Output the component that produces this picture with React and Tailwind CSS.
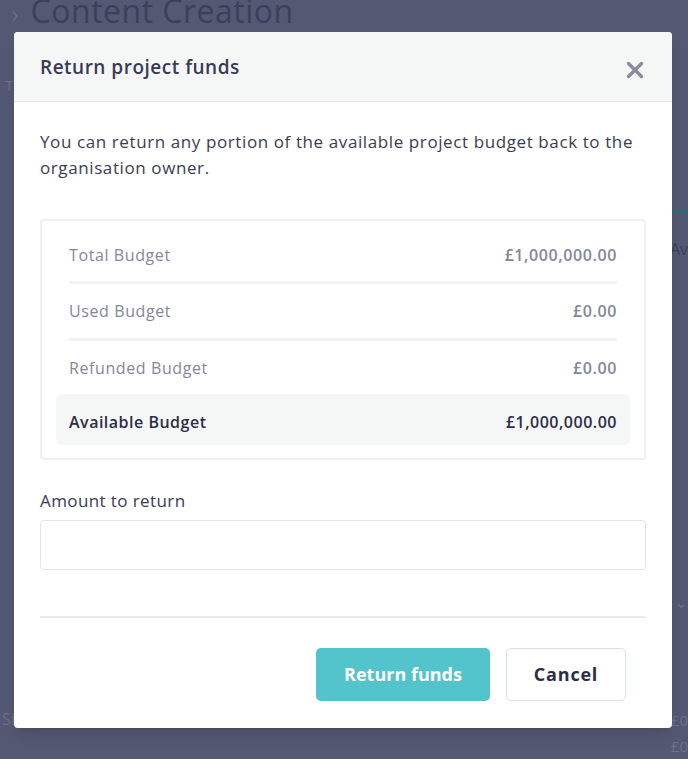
import React from "react";

const rows = [
  { label: "Total Budget", value: "£1,000,000.00" },
  { label: "Used Budget", value: "£0.00" },
  { label: "Refunded Budget", value: "£0.00" },
];

const font = { fontFamily: "'Open Sans', Lato, sans-serif" };

// dimmed page that sits behind the modal
const Backdrop = () => (
  <div className="absolute inset-0 flex flex-col text-[#6d7089]">
    <div className="flex h-[26px] items-end gap-[12px] pl-[12px]">
      <span className="text-[22px] leading-[26px]">›</span>
      <span className="text-[32px] leading-[30px] tracking-[0.5px] text-[#3c3f5c]">Content Creation</span>
    </div>
    <div className="flex flex-1 justify-between">
      <div className="flex flex-col pt-[48px] text-[15px]">
        <span className="pl-[5px]">T</span>
        <span className="mt-auto pb-[28px] pl-[2px] text-[16px]">SL</span>
      </div>
      <div className="flex flex-col items-end pt-[183px] text-[15px]">
        <div className="h-[4px] w-[16px] bg-[#2f6b72]" />
        <span className="mt-[24px] text-[16px] text-[#3c3f5c]">Av</span>
        <span className="mt-[330px]">n ⌄</span>
        <span className="mt-auto leading-[26px]">£0<br />£0</span>
      </div>
    </div>
  </div>
);

export default function App() {
  return (
    <div className="relative h-[759px] w-[688px] overflow-hidden bg-[#545872]" style={font}>
      <Backdrop />

      {/* modal */}
      <div className="absolute left-[14px] top-[32px] w-[658px] overflow-hidden rounded-[4px] bg-white shadow-lg">
        <div className="flex h-[70px] items-center justify-between border-b border-[#e3e5e8] bg-[#f5f7f6] pl-[26px] pr-[28px]">
          <h2 className="pt-[2px] text-[19px] font-semibold tracking-[0.5px] text-[#383b57]">Return project funds</h2>
          <svg width="18" height="18" viewBox="0 0 18 18" className="mt-[6px] text-[#8a8c9b]">
            <path d="M2.5 2.5 L15.5 15.5 M15.5 2.5 L2.5 15.5" stroke="currentColor" strokeWidth="3.4" strokeLinecap="round" />
          </svg>
        </div>

        <div className="px-[26px] pb-[27px] pt-[27px]">
          <p className="text-[17px] leading-[26px] tracking-[0.6px] text-[#3a3d52]">
            You can return any portion of the available project budget back to the organisation owner.
          </p>

          {/* budget summary */}
          <div className="mt-[38px] rounded-[4px] border-2 border-[#eef1f0] px-[14px] pb-[13px] pt-[8px]">
            {rows.map((row, i) => (
              <div key={row.label}>
                <div
                  className={
                    "flex items-center justify-between px-[13px] text-[16px] tracking-[0.6px] text-[#85879a] " +
                    (i === 0 ? "h-[52px]" : i === 1 ? "h-[54px]" : "h-[53px]")
                  }
                >
                  <span>{row.label}</span>
                  <span className="font-semibold">{row.value}</span>
                </div>
                {i < 2 && <div className="mx-[13px] h-[3px] bg-[#f2f4f4]" />}
              </div>
            ))}
            <div className="flex h-[51px] items-center justify-between rounded-[6px] bg-[#f5f7f7] px-[13px] pt-[4px] text-[16px] font-semibold tracking-[0.5px] text-[#2c2e45]">
              <span>Available Budget</span>
              <span>£1,000,000.00</span>
            </div>
          </div>

          <label className="mt-[29px] block text-[17px] leading-[24px] tracking-[0.4px] text-[#383b55]">Amount to return</label>
          <input className="mt-[7px] block h-[50px] w-full rounded-[4px] border border-[#e3e6e8] px-3 outline-none" />

          <div className="mt-[46px] h-[2px] bg-[#e9ebec]" />

          <div className="mt-[30px] flex justify-end gap-[16px] pr-[20px]">
            <button className="h-[53px] w-[174px] rounded-[5px] bg-[#53c3cc] text-[18px] font-bold text-white">
              Return funds
            </button>
            <button className="h-[53px] w-[120px] rounded-[5px] border border-[#d6e2e4] bg-white text-[18px] font-bold tracking-[0.8px] text-[#2c2e45]">
              Cancel
            </button>
          </div>
        </div>
      </div>
    </div>
  );
}
